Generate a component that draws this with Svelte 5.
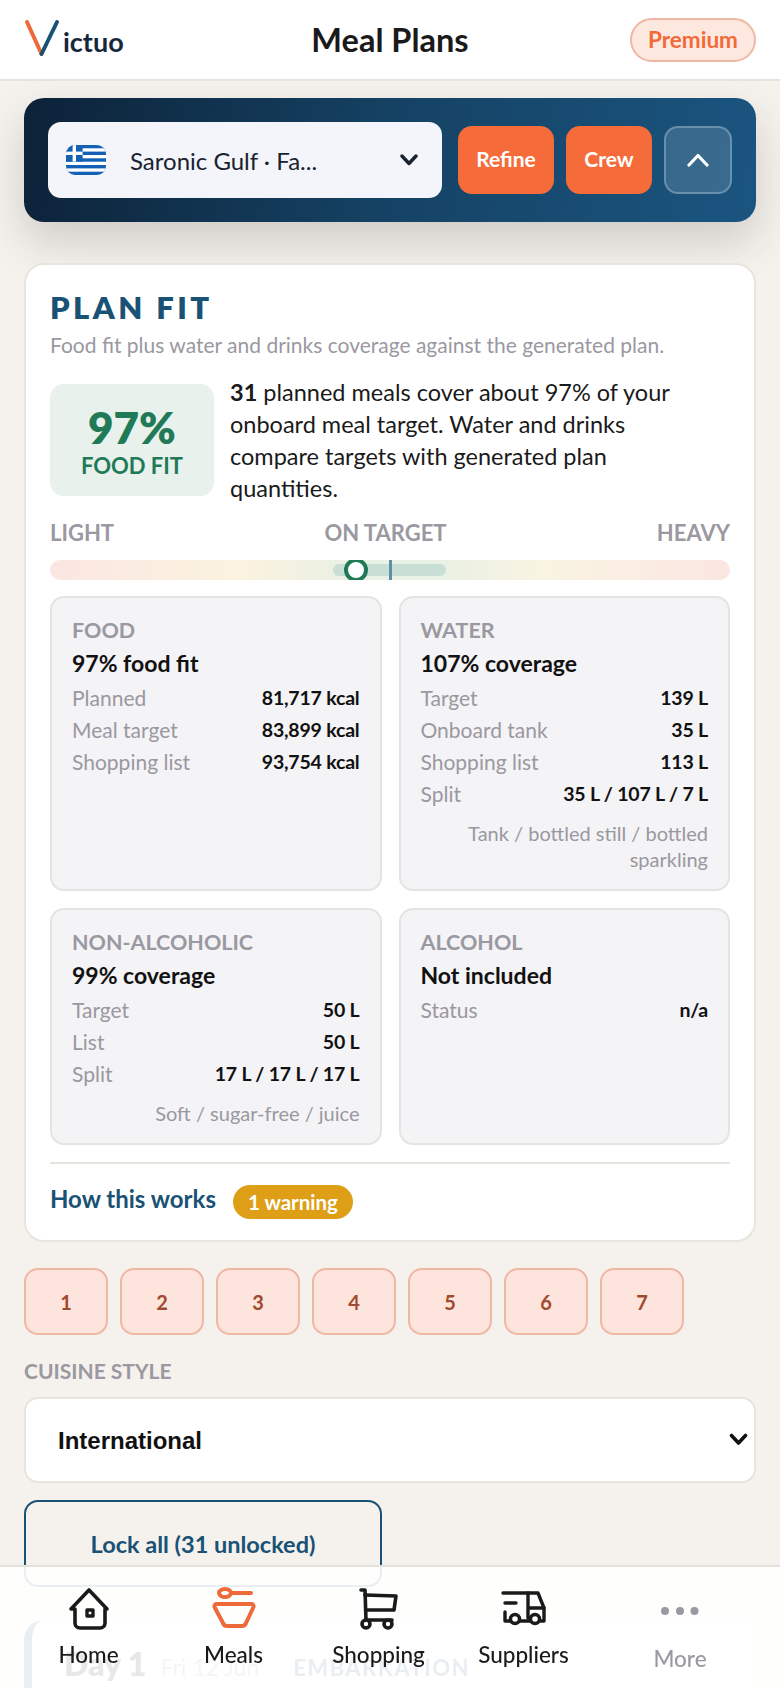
<script>
  const days = [1, 2, 3, 4, 5, 6, 7];

  const fits = [
    {
      label: "FOOD",
      head: "97% food fit",
      rows: [
        ["Planned", "81,717 kcal"],
        ["Meal target", "83,899 kcal"],
        ["Shopping list", "93,754 kcal"],
      ],
    },
    {
      label: "WATER",
      head: "107% coverage",
      rows: [
        ["Target", "139 L"],
        ["Onboard tank", "35 L"],
        ["Shopping list", "113 L"],
        ["Split", "35 L / 107 L / 7 L"],
      ],
      note: "Tank / bottled still / bottled sparkling",
    },
    {
      label: "NON-ALCOHOLIC",
      head: "99% coverage",
      rows: [
        ["Target", "50 L"],
        ["List", "50 L"],
        ["Split", "17 L / 17 L / 17 L"],
      ],
      note: "Soft / sugar-free / juice",
    },
    {
      label: "ALCOHOL",
      head: "Not included",
      rows: [["Status", "n/a"]],
    },
  ];
</script>

<div class="page">
  <header class="topbar">
    <div class="logo">
      <svg width="36" height="38" viewBox="0 0 36 38" fill="none" stroke-width="4" stroke-linecap="round">
        <path d="M3 3 L17.5 35" stroke="#ee6a3a" />
        <path d="M33 3 L17.5 35" stroke="#1a5276" />
      </svg>
      <span>ictuo</span>
    </div>
    <h1>Meal Plans</h1>
    <button class="premium">Premium</button>
  </header>

  <main>
    <section class="hero">
      <div class="voyage">
        <svg class="flag" width="40" height="30" viewBox="0 0 40 30">
          <defs>
            <clipPath id="flagclip"><rect width="40" height="30" rx="9" /></clipPath>
          </defs>
          <g clip-path="url(#flagclip)">
            <rect width="40" height="30" fill="#1261b5" />
            <rect y="3.3" width="40" height="3.3" fill="#fff" />
            <rect y="10" width="40" height="3.3" fill="#fff" />
            <rect y="16.7" width="40" height="3.3" fill="#fff" />
            <rect y="23.4" width="40" height="3.3" fill="#fff" />
            <rect width="16.6" height="16.6" fill="#1261b5" />
            <rect x="6.6" width="3.4" height="16.6" fill="#fff" />
            <rect y="6.6" width="16.6" height="3.4" fill="#fff" />
          </g>
        </svg>
        <span class="voyage-name">Saronic Gulf · Fa...</span>
        <svg width="18" height="12" viewBox="0 0 18 12" fill="none" stroke="#1a2230" stroke-width="3.4" stroke-linecap="round" stroke-linejoin="round">
          <path d="M2 2 L9 9.5 L16 2" />
        </svg>
      </div>
      <button class="action refine">Refine</button>
      <button class="action crew">Crew</button>
      <button class="collapse" aria-label="Collapse">
        <svg width="22" height="14" viewBox="0 0 22 14" fill="none" stroke="#fff" stroke-width="3.2" stroke-linecap="round" stroke-linejoin="round">
          <path d="M2 12 L11 2.5 L20 12" />
        </svg>
      </button>
    </section>

    <section class="card">
      <h2>PLAN FIT</h2>
      <p class="sub">Food fit plus water and drinks coverage against the generated plan.</p>

      <div class="summary">
        <div class="score">
          <strong>97%</strong>
          <span>FOOD FIT</span>
        </div>
        <p><b>31</b> planned meals cover about 97% of your onboard meal target. Water and drinks compare targets with generated plan quantities.</p>
      </div>

      <div class="scale-labels">
        <span>LIGHT</span>
        <span>ON TARGET</span>
        <span>HEAVY</span>
      </div>
      <div class="track">
        <div class="zone"></div>
        <div class="target"></div>
        <div class="dot"></div>
      </div>

      <div class="grid">
        {#each fits as fit}
          <div class="fit">
            <div class="fit-label">{fit.label}</div>
            <div class="fit-head">{fit.head}</div>
            {#each fit.rows as row}
              <div class="fit-row">
                <span>{row[0]}</span>
                <b>{row[1]}</b>
              </div>
            {/each}
            {#if fit.note}
              <div class="fit-note">{fit.note}</div>
            {/if}
          </div>
        {/each}
      </div>

      <div class="foot">
        <a href="#how">How this works</a>
        <span class="badge">1 warning</span>
      </div>
    </section>

    <div class="days">
      {#each days as d}
        <button class="day">{d}</button>
      {/each}
    </div>

    <div class="field-label">CUISINE STYLE</div>
    <div class="select-wrap">
      <select>
        <option>International</option>
      </select>
      <svg width="19" height="13" viewBox="0 0 19 13" fill="none" stroke="#111" stroke-width="3.6" stroke-linecap="round" stroke-linejoin="round">
        <path d="M2.5 2.5 L9.5 10 L16.5 2.5" />
      </svg>
    </div>

    <button class="lock">Lock all (31 unlocked)</button>

    <section class="day-card">
      <span class="day-title">Day 1</span>
      <span class="day-date">Fri 12 Jun</span>
      <span class="day-tag">EMBARKATION</span>
    </section>
  </main>

  <nav class="tabs">
    <div class="tab">
      <svg width="48" height="48" viewBox="0 0 48 48" fill="none" stroke="#1a1a1a" stroke-width="3.6" stroke-linecap="round" stroke-linejoin="round">
        <path d="M6 24 L24 5 L42 24 H40 V38 a5 5 0 0 1 -5 5 H15 a5 5 0 0 1 -5 -5 V24 Z" />
        <rect x="22" y="25" width="6" height="6" stroke-width="3.4" />
      </svg>
      <span>Home</span>
    </div>
    <div class="tab meals">
      <svg width="48" height="48" viewBox="0 0 48 48" fill="none" stroke="#ee6a3a" stroke-width="4" stroke-linecap="round" stroke-linejoin="round">
        <ellipse cx="15" cy="8" rx="6" ry="4" />
        <path d="M21 8 H41" />
        <path d="M7 19 H41 Q44 19 43.5 22 L36 38 Q35 41 32 41 H17 Q14 41 13 38 L4.5 22 Q4 19 7 19 Z" />
      </svg>
      <span>Meals</span>
    </div>
    <div class="tab">
      <svg width="48" height="48" viewBox="0 0 48 48" fill="none" stroke="#1a1a1a" stroke-width="3.6" stroke-linecap="round" stroke-linejoin="round">
        <path d="M6 5 H10 L11 35 H37" />
        <path d="M10 10 L41 11 L39 25 H11" />
        <circle cx="11" cy="39" r="4" />
        <circle cx="33" cy="39" r="4" />
      </svg>
      <span>Shopping</span>
    </div>
    <div class="tab">
      <svg width="48" height="48" viewBox="0 0 48 48" fill="none" stroke="#1a1a1a" stroke-width="3.4" stroke-linecap="round" stroke-linejoin="round">
        <path d="M3 8 H38 L44 23 V36 H40" />
        <path d="M28 8 V33 M28 23 H44" />
        <path d="M5 18 H16 M5 27 V36 H10 M20 36 H30" />
        <circle cx="15" cy="34" r="4.5" />
        <circle cx="35" cy="34" r="4.5" />
      </svg>
      <span>Suppliers</span>
    </div>
    <div class="tab more">
      <svg width="48" height="48" viewBox="0 0 48 48" fill="#9a98a0">
        <circle cx="9" cy="26" r="4" />
        <circle cx="24" cy="26" r="4" />
        <circle cx="38.5" cy="26" r="4" />
      </svg>
      <span>More</span>
    </div>
  </nav>
</div>

<style>
  :global(body) {
    background: #f5f1ec;
    color: #1a1a1a;
    font-family: "Lato", "Noto Sans", sans-serif;
  }

  .page {
    height: 100vh;
    overflow: hidden;
  }

  button {
    font-family: inherit;
    cursor: pointer;
  }

  .topbar {
    height: 79px;
    background: #fff;
    border-bottom: 2px solid #e8e3dc;
    display: flex;
    align-items: center;
    justify-content: space-between;
    padding: 0 24px 0 24px;
    position: relative;
  }

  .logo {
    display: flex;
    align-items: flex-end;
    height: 38px;
    margin-top: -4px;
  }

  .logo span {
    font-size: 27px;
    font-weight: 700;
    color: #16283c;
    margin-left: 3px;
    line-height: 30px;
  }

  h1 {
    position: absolute;
    left: 0;
    right: 0;
    margin: 0;
    text-align: center;
    font-size: 32.5px;
    font-weight: 700;
    color: #1a1a1a;
  }

  .premium {
    width: 126px;
    height: 44px;
    border-radius: 22px;
    border: 2px solid #eeb8a4;
    background: #fde8e0;
    color: #f16a38;
    font-size: 22.5px;
    font-weight: 700;
    position: relative;
    padding: 0;
  }

  main {
    padding: 17px 24px 0;
  }

  .hero {
    height: 124px;
    box-sizing: border-box;
    border-radius: 20px;
    background: linear-gradient(100deg, #0c2238 0%, #154264 50%, #1a5580 100%);
    box-shadow: 0 20px 44px rgba(40, 40, 40, 0.18);
    display: flex;
    align-items: center;
    padding: 0 24px;
  }

  .voyage {
    width: 394px;
    height: 76px;
    border-radius: 13px;
    background: #f4f5fa;
    display: flex;
    align-items: center;
    box-sizing: border-box;
    padding: 0 24px 0 18px;
    margin-right: 16px;
  }

  .flag {
    flex: none;
    margin-right: 24px;
  }

  .voyage-name {
    flex: 1;
    font-size: 24px;
    color: #1a2230;
  }

  .action {
    height: 68px;
    border: 0;
    border-radius: 14px;
    background: #f56b39;
    color: #fff;
    font-size: 21px;
    font-weight: 700;
    margin-right: 12px;
    padding: 0 0 4px;
  }

  .refine {
    width: 96px;
  }

  .crew {
    width: 86px;
  }

  .collapse {
    width: 68px;
    height: 68px;
    box-sizing: border-box;
    border-radius: 14px;
    background: rgba(255, 255, 255, 0.14);
    border: 2px solid rgba(255, 255, 255, 0.25);
    display: flex;
    align-items: center;
    justify-content: center;
    padding: 0;
  }

  .card {
    margin-top: 41px;
    height: 979px;
    box-sizing: border-box;
    background: #fff;
    border: 2px solid #e8e4de;
    border-radius: 20px;
    padding: 24px 24px 0;
  }

  h2 {
    margin: 0;
    font-size: 31px;
    line-height: 36px;
    font-weight: 800;
    letter-spacing: 3.4px;
    color: #1a5276;
  }

  .sub {
    margin: 7px 0 0;
    font-size: 21px;
    line-height: 26px;
    color: #9a98a0;
  }

  .summary {
    display: flex;
    gap: 16px;
    margin-top: 26px;
  }

  .score {
    flex: none;
    width: 164px;
    height: 112px;
    border-radius: 14px;
    background: #e9f1ed;
    color: #217a57;
    display: flex;
    flex-direction: column;
    align-items: center;
    justify-content: center;
  }

  .score strong {
    font-size: 44px;
    line-height: 52px;
    font-weight: 800;
  }

  .score span {
    font-size: 22px;
    line-height: 26px;
    font-weight: 700;
  }

  .summary p {
    margin: -8px 0 0;
    max-width: 470px;
    font-size: 23.5px;
    line-height: 32px;
    color: #1a1a1a;
  }

  .scale-labels {
    display: flex;
    justify-content: space-between;
    margin-top: 16px;
    font-size: 22px;
    line-height: 26px;
    font-weight: 700;
    color: #9a98a0;
  }

  .track {
    position: relative;
    height: 20px;
    margin-top: 14px;
    border-radius: 10px;
    overflow: hidden;
    background: linear-gradient(90deg, #fbe6e2 0%, #fbf3df 28%, #e9f0e4 45%, #e9f0e4 58%, #f9f4e2 72%, #fbe6e2 100%);
  }

  .zone {
    position: absolute;
    left: 283px;
    width: 113px;
    top: 4px;
    height: 12px;
    border-radius: 6px;
    background: #c8dfd5;
  }

  .target {
    position: absolute;
    left: 339px;
    top: 0;
    width: 3px;
    height: 20px;
    background: #5e8ea8;
  }

  .dot {
    position: absolute;
    left: 294px;
    top: -2px;
    width: 24px;
    height: 24px;
    box-sizing: border-box;
    border: 4px solid #217a57;
    border-radius: 50%;
    background: #fff;
  }

  .grid {
    display: grid;
    grid-template-columns: 1fr 1fr;
    grid-template-rows: 295px 237px;
    gap: 17px;
    margin-top: 16px;
  }

  .fit {
    box-sizing: border-box;
    background: #f4f3f6;
    border: 2px solid #e6e4e0;
    border-radius: 14px;
    padding: 18px 20px 0;
  }

  .fit-label {
    font-size: 21.5px;
    line-height: 28px;
    font-weight: 700;
    color: #9a98a0;
    margin-bottom: 2px;
  }

  .fit-head {
    font-size: 23px;
    line-height: 34px;
    font-weight: 700;
    color: #111;
    margin-bottom: 2px;
  }

  .fit-row {
    display: flex;
    justify-content: space-between;
    font-size: 21px;
    line-height: 32px;
    color: #9a98a0;
  }

  .fit-row b {
    color: #111;
    font-size: 19.5px;
    letter-spacing: -0.2px;
    font-weight: 700;
  }

  .fit-note {
    margin-top: 10px;
    text-align: right;
    font-size: 20px;
    line-height: 26px;
    color: #9a98a0;
  }

  .foot {
    margin-top: 17px;
    border-top: 2px solid #e8e4de;
    padding-top: 13px;
    display: flex;
    align-items: center;
    gap: 17px;
  }

  .foot a {
    font-size: 24px;
    font-weight: 700;
    color: #1a5276;
    text-decoration: none;
  }

  .badge {
    margin-top: 8px;
    background: #de9f17;
    color: #fff;
    font-size: 20.5px;
    font-weight: 700;
    line-height: 34px;
    padding: 0 15px;
    border-radius: 17px;
  }

  .days {
    display: flex;
    gap: 12px;
    margin-top: 26px;
  }

  .day {
    width: 84px;
    height: 67px;
    border-radius: 14px;
    border: 2px solid #eeb8a4;
    background: #fde4dc;
    color: #a04a30;
    font-size: 20px;
    font-weight: 700;
  }

  .field-label {
    margin-top: 23px;
    font-size: 21px;
    line-height: 26px;
    font-weight: 700;
    color: #9a98a0;
  }

  .select-wrap {
    position: relative;
    margin-top: 13px;
  }

  .select-wrap svg {
    position: absolute;
    right: 8px;
    top: 36px;
  }

  select {
    appearance: none;
    width: 100%;
    height: 86px;
    box-sizing: border-box;
    background: #fff;
    border: 2px solid #e8e4de;
    border-radius: 14px;
    padding: 0 32px;
    font-family: "Liberation Sans", Arial, sans-serif;
    font-size: 24px;
    font-weight: 700;
    color: #111;
  }

  .lock {
    display: block;
    margin-top: 17px;
    width: 358px;
    height: 87px;
    border: 2px solid #1a5276;
    border-radius: 14px;
    background: transparent;
    color: #1a5276;
    font-size: 23.5px;
    font-weight: 700;
  }

  .day-card {
    margin-top: 33px;
    height: 120px;
    box-sizing: border-box;
    background: #fff;
    border-left: 8px solid #1a5276;
    border-radius: 20px;
    padding: 24px 0 0 32px;
    display: flex;
    align-items: baseline;
  }

  .day-title {
    font-size: 32px;
    font-weight: 800;
    color: #1a1a1a;
  }

  .day-date {
    margin-left: 14px;
    font-size: 23px;
    color: #9a98a0;
  }

  .day-tag {
    margin-left: 34px;
    font-size: 22px;
    font-weight: 700;
    letter-spacing: 1.5px;
    color: #1a5276;
  }

  .tabs {
    position: fixed;
    left: 0;
    right: 0;
    bottom: 0;
    height: 123px;
    box-sizing: border-box;
    padding: 18px 16px 0;
    background: rgba(255, 255, 255, 0.9);
    border-top: 2px solid #e4e2df;
    display: grid;
    grid-template-columns: repeat(4, 145px) 1fr;
  }

  .tab {
    display: flex;
    flex-direction: column;
    align-items: center;
    font-size: 22.5px;
    font-weight: 500;
    color: #1a1a1a;
  }

  .tab span {
    margin-top: 9px;
    line-height: 26px;
  }

  .more {
    color: #9a98a0;
  }

  .more span {
    margin-top: 13px;
  }
</style>
